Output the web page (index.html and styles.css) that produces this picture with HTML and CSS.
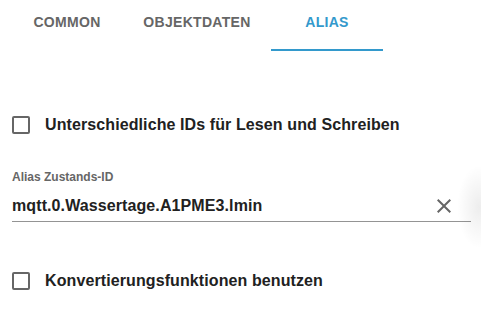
FILE: index.html
```html
<!DOCTYPE html>
<html lang="de">
<head>
  <meta charset="UTF-8" />
  <title>Alias</title>
  <link rel="stylesheet" href="styles.css">
</head>
<body>
  <div class="tabs">
    <div class="tab">COMMON</div>
    <div class="tab">OBJEKTDATEN</div>
    <div class="tab active">ALIAS</div>
  </div>

  <div class="content">
    <label class="check-row first">
      <span class="box"></span>
      <span>Unterschiedliche IDs für Lesen und Schreiben</span>
    </label>

    <div class="field-label">Alias Zustands-ID</div>
    <div class="field">
      <span class="field-value">mqtt.0.Wassertage.A1PME3.lmin</span>
      <svg class="clear" viewBox="0 0 24 24" width="24" height="24">
        <path d="M19 6.41L17.59 5 12 10.59 6.41 5 5 6.41 10.59 12 5 17.59 6.41 19 12 13.41 17.59 19 19 17.59 13.41 12z" fill="#666"/>
      </svg>
    </div>

    <label class="check-row second">
      <span class="box"></span>
      <span>Konvertierungsfunktionen benutzen</span>
    </label>
  </div>

  <div class="edge-shadow"></div>
</body>
</html>
```

FILE: styles.css
```css
body {
  margin: 0;
  background: #fff;
  font-family: 'Liberation Sans', Arial, sans-serif;
  color: #212121;
  position: relative;
  height: 311px;
  overflow: hidden;
}
.tabs {
  display: flex;
  padding-left: 2px;
}
.tab {
  position: relative;
  width: 130px;
  height: 51px;
  box-sizing: border-box;
  padding-top: 14px;
  text-align: center;
  font-size: 14px;
  line-height: 16px;
  font-weight: bold;
  letter-spacing: 0.3px;
  color: #666;
}
.tab.active {
  color: #3399cc;
}
.tab.active::after {
  content: "";
  position: absolute;
  left: 9px;
  right: 9px;
  bottom: 0;
  height: 2px;
  background: #3399cc;
}
.content {
  padding: 0 10px 0 12px;
}
.check-row {
  display: flex;
  align-items: center;
  gap: 15px;
  font-size: 16px;
  line-height: 18px;
  font-weight: bold;
  letter-spacing: 0.1px;
}
.check-row.first {
  margin-top: 65px;
}
.check-row.second {
  margin-top: 50px;
}
.box {
  width: 18px;
  height: 18px;
  box-sizing: border-box;
  border: 2px solid #666;
  border-radius: 2px;
}
.field-label {
  margin-top: 36px;
  font-size: 12px;
  line-height: 14px;
  font-weight: bold;
  color: #666;
}
.field {
  display: flex;
  align-items: center;
  justify-content: space-between;
  margin-top: 10px;
  height: 24px;
  padding: 0 15px 3px 0;
  border-bottom: 1px solid #949494;
}
.field-value {
  font-size: 16px;
  line-height: 18px;
  font-weight: bold;
  letter-spacing: 0.1px;
}
.clear {
  display: block;
}
.edge-shadow {
  position: absolute;
  right: -20px;
  top: 165px;
  width: 44px;
  height: 84px;
  background: radial-gradient(ellipse at center, rgba(0,0,0,0.07), rgba(0,0,0,0) 70%);
}
```
